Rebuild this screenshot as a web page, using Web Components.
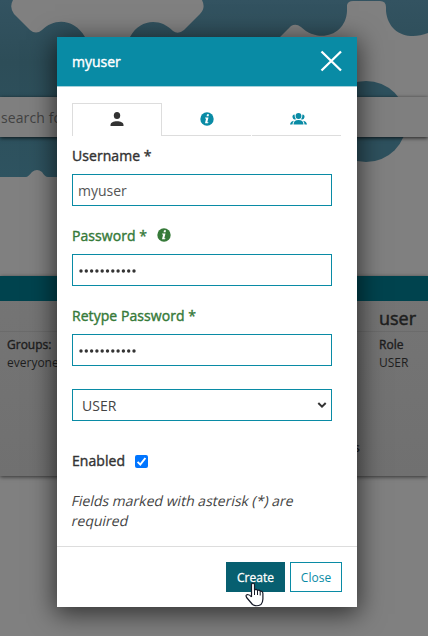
<!DOCTYPE html>
<html lang="en"><head><meta charset="utf-8"><title>myuser</title>
<style>html,body{margin:0;width:428px;height:636px;overflow:hidden;font-family:"Open Sans","Noto Sans",sans-serif}</style></head>
<body><user-admin></user-admin>
<script>
const define=(name,html)=>customElements.define(name,class extends HTMLElement{
  constructor(){super();const t=document.createElement('template');t.innerHTML=html;this.attachShadow({mode:'open'}).append(t.content.cloneNode(true))}
});
define('admin-background',`<style>
:host{display:flex;flex-direction:column;width:428px;height:636px;background:#808080;position:relative;color:#1e1e1e;overflow:hidden}
svg{position:absolute;inset:0}
.search{margin-top:97px;height:40px;box-sizing:border-box;padding-left:1px;background:#7f7f7f;box-shadow:0 1px 4px rgba(0,0,0,.75);font-size:14px;line-height:41px;color:#424242;position:relative;letter-spacing:.1px}
.card{margin-top:139px;height:200px;background:linear-gradient(#757575,#707070);box-shadow:0 1px 4px rgba(0,0,0,.6);position:relative}
.bar{height:25px;background:#00434e}
.cols{display:grid;grid-template-columns:372px 56px;padding-left:7px;font-size:12px;line-height:17px}
h3{margin:0;height:31px;font-size:18px;line-height:35px;font-weight:500;-webkit-text-stroke:.5px;border-bottom:1px solid #6b6b6b;box-sizing:border-box}
.left h3{margin-left:-7px}
b{font-weight:500;-webkit-text-stroke:.4px;display:block;padding-top:4px;line-height:18px}
.end{position:absolute;left:354px;top:163px;font-size:12px;font-weight:600}
</style>
<svg width="428" height="200"><defs><linearGradient id="g" x2="0" y2="1"><stop stop-color="#335361"/><stop offset=".35" stop-color="#2d4d58"/><stop offset="1" stop-color="#2e5360"/></linearGradient></defs>
<path fill="url(#g)" d="M0 0H428V177H0Z"/>
<path fill="#808080" d="M13 0Q9 7 14 14L30 30Q36 35 42 30C54 18 74 18 85 37V97H130V37C140 18 161 18 173 31Q178 35 184 30L200 14Q206 8 202 0ZM280 37L291 26Q296 23 301 27C319 44 346 35 347 11V5Q348 1 353 1H380Q386 1 386 7V11C388 33 408 41 428 33V177H280ZM26 177Q28 177 32 172Q37 168 42 172Q45 177 48 177Z"/>
<circle cx="366" cy="121.500" r="40.500" fill="#2e515e"/></svg>
<div class="search">search for users</div>
<div class="card"><div class="bar"></div><div class="cols"><div class="left"><h3></h3><b>Groups:</b>everyone</div><div><h3>user</h3><b>Role</b>USER</div></div><span class="end">s</span></div>`);
define('info-icon',`<style>:host{display:inline-flex}svg{display:block}</style><svg width="14" height="14" viewBox="0 0 14 14"><circle cx="7" cy="7" r="6.700" fill="currentColor"/><path fill="#fff" d="M7 2.300h2L8.600 4.300h-2zM5.200 5.400H8.500L7.300 10.200H8.500L8 11.300H5L6.100 6.500H5z"/></svg>`);
define('modal-header',`<style>:host{height:50px;display:flex;justify-content:space-between;align-items:center;box-sizing:border-box;padding:0 15px;background:#098ba5;color:#fff;font-size:14px;font-weight:500;-webkit-text-stroke:.4px;border-bottom:1px solid #a6d1da}svg{display:block;margin-top:-2px}</style><slot></slot><svg width="22" height="22"><path d="M1.500 1.500L21 20.500M21 1.500L1.500 20.500" stroke="#fff" stroke-width="2.300"/></svg>`);
define('modal-tabs',`<style>:host{display:grid;grid-template-columns:90px 90px 90px;height:33px;color:#098ba5}div{display:flex;align-items:center;justify-content:center;border-bottom:1px solid #ddd;margin-right:1px}.on{color:#333;border:1px solid #ddd;border-bottom:0;margin-right:0}.groups{padding-left:3px}svg{display:block}</style>
<div class="on"><svg width="14" height="16"><ellipse cx="7" cy="3.600" rx="3.200" ry="3.500" fill="currentColor"/><path fill="currentColor" d="M.5 14V13C.5 10.400 3.500 9.200 7 9.200s6.500 1.200 6.500 3.800v1z"/></svg></div>
<div><info-icon></info-icon></div>
<div class="groups"><svg width="17" height="12" fill="currentColor"><circle cx="8.500" cy="3" r="2.900"/><path d="M4.600 1.400a2.500 2.500 0 1 0 1.300 4.800Q4.400 4 4.600 1.400M12.400 1.400a2.500 2.500 0 1 1-1.300 4.800Q12.600 4 12.400 1.400M3.500 11.500Q3.700 7.100 8.500 7.100t5 4.400zM0 11.500Q.4 8.500 3.900 7.700 2.500 9.400 2.500 11.500zM17 11.500Q16.600 8.500 13.100 7.700 14.500 9.400 14.500 11.500z"/></svg></div>`);
define('form-field',`<style>:host{display:block;width:260px;height:80px;color:#333}.label{height:38px;font-size:14px;line-height:41px;font-weight:500;letter-spacing:.06px;-webkit-text-stroke:.4px;display:flex;align-items:center;gap:10px}.input{height:32px;border:1px solid #098ba5;box-sizing:border-box;padding:0 5px;display:flex;align-items:center;font-size:14px;color:#555}</style><div class="label"><slot name="label"></slot><slot name="icon"></slot></div><div class="input"><slot></slot></div>`);
define('password-dots',`<style>:host{display:flex;padding:1px 0 0 .7px}svg{display:block}</style><svg width="59" height="4" fill="#333">${Array.from({length:11},(_,i)=>`<circle cx="${(2+i*5.3).toFixed(1)}" cy="2" r="1.700"/>`).join('')}</svg>`);
define('role-select',`<style>:host{box-sizing:border-box;width:260px;height:32px;border:1px solid #098ba5;display:flex;align-items:center;justify-content:space-between;padding:0 4px 0 9px;font-size:14px;color:#444}</style><slot></slot><svg width="10" height="7"><path d="M1.300 1L5 4.700 8.700 1" fill="none" stroke="#333" stroke-width="2"/></svg>`);
define('check-field',`<style>:host{display:flex;align-items:center;gap:10px;height:20px;font-size:14px;font-weight:500;letter-spacing:.06px;-webkit-text-stroke:.4px;color:#333}span{margin-top:-1px}svg{display:block}</style><span><slot></slot></span><svg width="13" height="13"><rect width="13" height="13" rx="2" fill="#0075ff"/><path d="M2.600 6.900L5.300 9.600 10.400 3" fill="none" stroke="#fff" stroke-width="2"/></svg>`);
define('action-button',`<style>:host{display:flex;align-items:center;justify-content:center;box-sizing:border-box;height:30px;width:52px;border:1px solid #098ba5;font-size:12px;color:#098ba5}:host([primary]){width:59px;background:#075f70;border-color:#075f70;color:#fff;font-weight:500;-webkit-text-stroke:.3px}</style><slot></slot>`);
define('hand-cursor',`<style>:host{position:absolute;left:188px;top:545px}svg{display:block}</style><svg width="19" height="25"><path d="M6.500 15V3C6.500.6 9.500.6 9.500 3V8Q11.500 6.500 12.500 8.500 14.300 7.300 15.200 9.300 17.600 8.500 17.900 11.500V17Q17.900 20 16 22.500 11.500 25 7.500 22.500L1.600 15.500Q.2 12.800 2.500 12.500 4.600 12.500 6.500 15" fill="#fff" stroke="#151927" stroke-width="1.200" stroke-linejoin="round"/><path d="M9.500 8v5M12.500 8.500v4.500M15.200 9.500v4" stroke="#151927" stroke-width="1"/></svg>`);
define('user-modal',`<style>
:host{position:absolute;left:57px;top:37px;width:300px;height:570px;background:#fff;display:flex;flex-direction:column;box-shadow:0 5px 24px 2px rgba(0,0,0,.62)}
.body{padding:16px 15px 0;height:460px;box-sizing:border-box;border-bottom:1px solid #ddd;display:flex;flex-direction:column;flex:none}
form-field{flex:none}.green{color:#367a39}info-icon{color:#367a39}
role-select{margin-top:13px;flex:none}check-field{margin-top:30px}
p{margin:20px 0 0;font-size:14px;line-height:20px;color:#444}
p span{display:block;width:max-content;transform:skewX(-13deg)}
footer{display:flex;justify-content:flex-end;gap:5px;padding:15px}
modal-header{flex:none}</style>
<modal-header>myuser</modal-header>
<div class="body"><modal-tabs></modal-tabs>
<form-field><span slot="label">Username *</span>myuser</form-field>
<form-field><span slot="label" class="green">Password *</span><info-icon slot="icon"></info-icon><password-dots></password-dots></form-field>
<form-field><span slot="label" class="green">Retype Password *</span><password-dots></password-dots></form-field>
<role-select>USER</role-select><check-field>Enabled</check-field>
<p><span>Fields marked with asterisk (*) are</span><span>required</span></p></div>
<footer><action-button primary>Create</action-button><action-button>Close</action-button></footer><hand-cursor></hand-cursor>`);
define('user-admin',`<style>:host{display:block;position:relative;width:428px;height:636px;overflow:hidden}</style><admin-background></admin-background><user-modal></user-modal>`);
</script></body></html>
